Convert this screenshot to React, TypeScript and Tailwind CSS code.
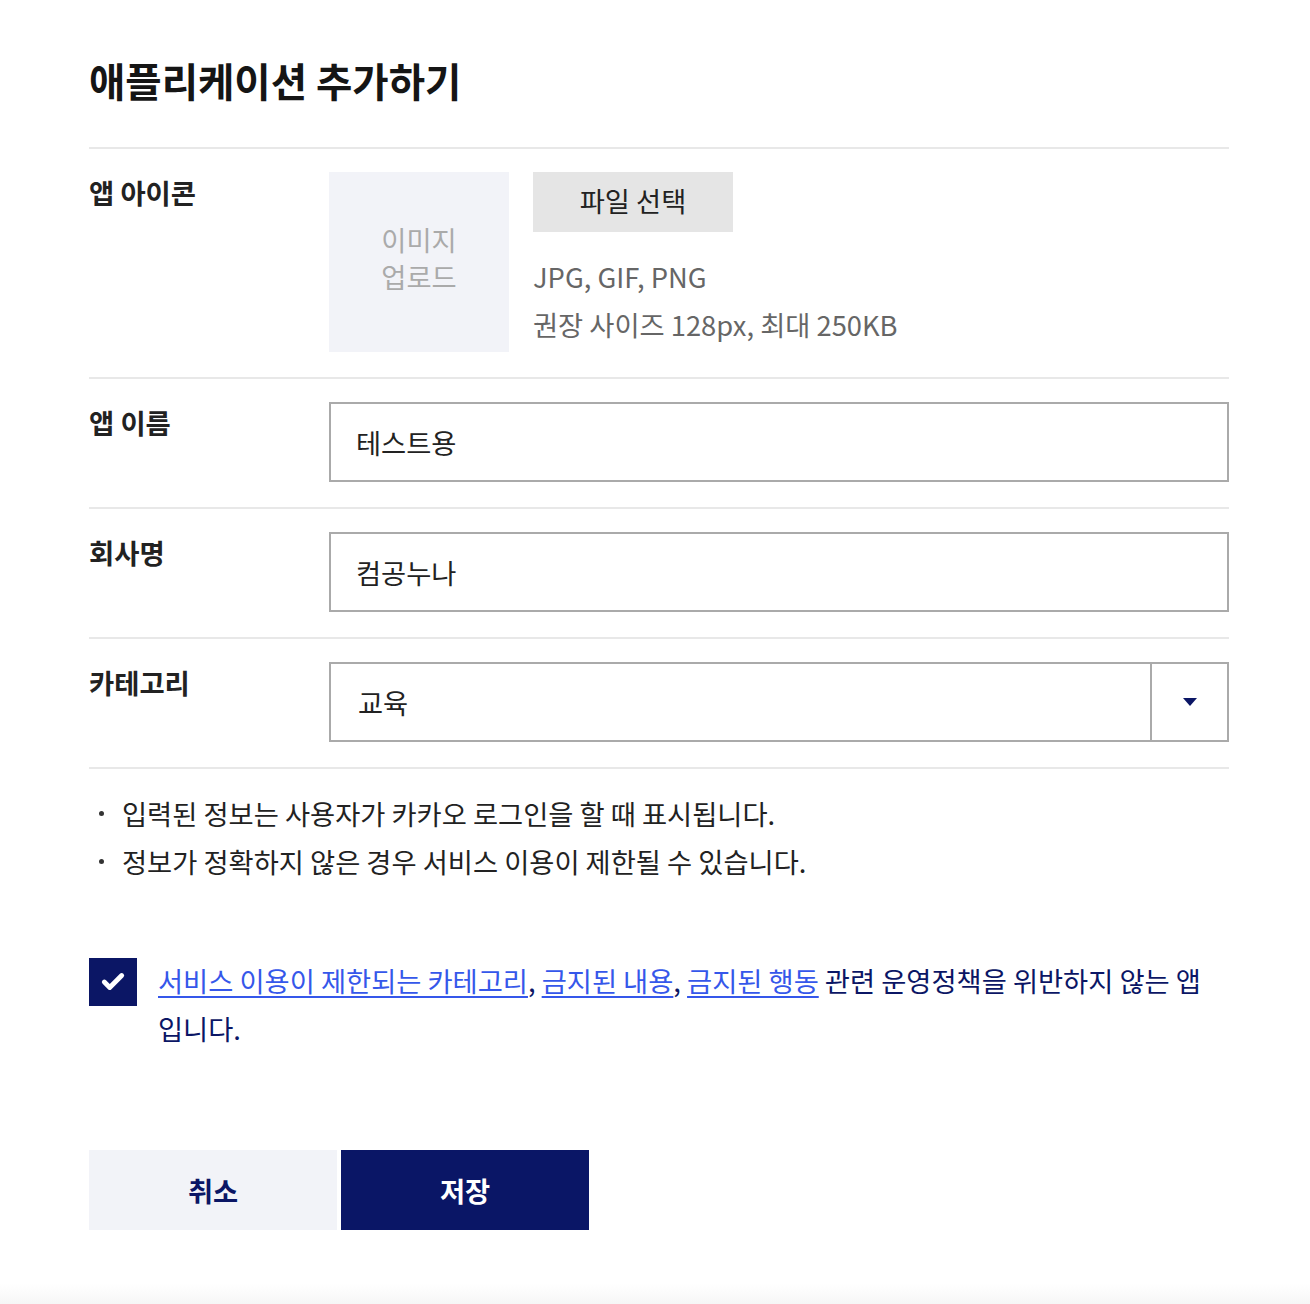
import { Check } from 'lucide-react';

const font = { fontFamily: '"Noto Sans CJK KR", "Noto Sans", sans-serif' };

function Row({ label, children }: { label: string; children: React.ReactNode }) {
  return (
    <div className="flex border-t-2 border-[#e8e8e8] pt-[23px] pb-[25px]">
      <div className="w-[240px] shrink-0 text-[27.4px] leading-[40px] font-bold text-[#222]">{label}</div>
      <div className="flex-1">{children}</div>
    </div>
  );
}

export default function App() {
  return (
    <div className="min-h-[1304px] bg-white flex flex-col" style={font}>
      <div className="w-[1140px] ml-[89px] pt-[56px] flex-1">
        <h1 className="text-[39.5px] leading-[48px] font-bold text-[#151515] mb-[43px]">애플리케이션 추가하기</h1>

        <Row label="앱 아이콘">
          <div className="flex">
            <div className="w-[180px] h-[180px] pb-[8px] bg-[#f2f3f8] flex items-center justify-center text-center text-[27.3px] leading-[37px] text-[#aaaaaa]">
              이미지
              <br />
              업로드
            </div>
            <div className="ml-[24px]">
              <button className="w-[200px] h-[60px] pb-[4px] bg-[#e5e5e5] text-[27.3px] text-[#222]">파일 선택</button>
              <div className="mt-[20px] text-[27.3px] leading-[48px] text-[#666]">
                <p>JPG, GIF, PNG</p>
                <p>권장 사이즈 128px, 최대 250KB</p>
              </div>
            </div>
          </div>
        </Row>

        <Row label="앱 이름">
          <div className="h-[80px] border-2 border-[#aaaaaa] flex items-center px-[25px] text-[27.3px] text-[#222]">테스트용</div>
        </Row>

        <Row label="회사명">
          <div className="h-[80px] border-2 border-[#aaaaaa] flex items-center px-[25px] text-[27.3px] text-[#222]">컴공누나</div>
        </Row>

        <Row label="카테고리">
          <div className="h-[80px] border-2 border-[#aaaaaa] flex items-stretch text-[27.3px] text-[#222]">
            <div className="flex-1 flex items-center px-[27px]">교육</div>
            <div className="w-[77px] border-l-2 border-[#aaaaaa] flex items-center justify-center">
              <svg width="16" height="10" viewBox="0 0 16 10">
                <path d="M1 1h14L8 9z" fill="#0b1665" />
              </svg>
            </div>
          </div>
        </Row>

        <ul className="border-t-2 border-[#e8e8e8] pt-[20px] text-[27.3px] leading-[48px] text-[#222]">
          <li className="flex items-center">
            <span className="w-[5px] h-[5px] rounded-full bg-[#333] ml-[10px] mr-[18px]" />
            입력된 정보는 사용자가 카카오 로그인을 할 때 표시됩니다.
          </li>
          <li className="flex items-center">
            <span className="w-[5px] h-[5px] rounded-full bg-[#333] ml-[10px] mr-[18px]" />
            정보가 정확하지 않은 경우 서비스 이용이 제한될 수 있습니다.
          </li>
        </ul>

        <div className="flex mt-[71px]">
          <div className="w-[48px] h-[48px] mt-[2px] shrink-0 bg-[#0b1665] flex items-center justify-center">
            <Check size={26} strokeWidth={4.5} color="#ffffff" />
          </div>
          <p className="ml-[21px] text-[27.3px] leading-[48px] text-[#0b1665]">
            <a className="text-[#3557ea] underline underline-offset-4">서비스 이용이 제한되는 카테고리</a>,{' '}
            <a className="text-[#3557ea] underline underline-offset-4">금지된 내용</a>,{' '}
            <a className="text-[#3557ea] underline underline-offset-4">금지된 행동</a> 관련 운영정책을 위반하지 않는 앱
            입니다.
          </p>
        </div>

        <div className="flex gap-[4px] mt-[98px]">
          <button className="w-[248px] h-[80px] bg-[#f2f3f8] text-[27.3px] font-bold text-[#0b1665]">취소</button>
          <button className="w-[248px] h-[80px] bg-[#0a1666] text-[27.3px] font-bold text-white">저장</button>
        </div>
      </div>
      <div className="h-[20px] bg-gradient-to-b from-white to-[#f6f6f6]" />
    </div>
  );
}
